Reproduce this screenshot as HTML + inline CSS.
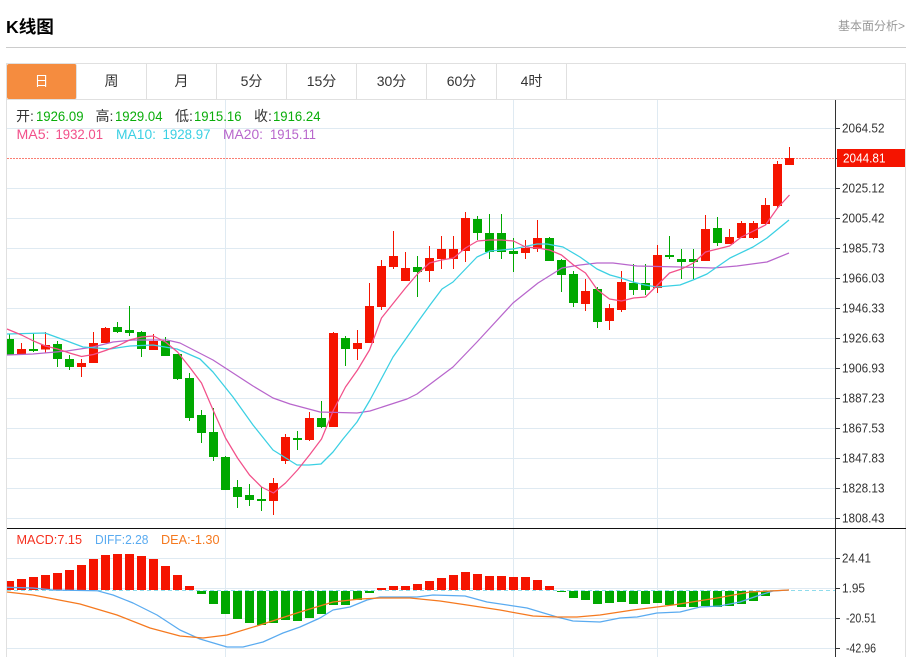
<!DOCTYPE html>
<html lang="zh">
<head>
<meta charset="utf-8">
<title>K线图</title>
<style>
html,body{margin:0;padding:0;background:#fff;}
body{width:907px;height:657px;overflow:hidden;position:relative;font-family:"Liberation Sans","Noto Sans CJK SC",sans-serif;color:#333;}
.title{position:absolute;left:6px;top:15px;font-size:17.6px;line-height:24px;font-weight:bold;color:#000;}
.more{position:absolute;left:838px;top:18px;font-size:12px;line-height:16px;color:#999;white-space:nowrap;}
.hr{position:absolute;left:6px;top:47px;width:900px;height:1px;background:#ccc;}
.tabs{position:absolute;left:6px;top:63px;width:898px;height:35px;border:1px solid #e0e0e0;box-sizing:content-box;}
.tab{position:absolute;top:0;height:35px;width:69px;border-right:1px solid #e0e0e0;text-align:center;font-size:14px;line-height:35px;color:#333;}
.tab.on{background:#f58c3f;color:#fff;border-radius:2px;border-right-color:#e0e0e0;}
svg{position:absolute;left:0;top:0;}
svg text{font-family:"Liberation Sans","Noto Sans CJK SC",sans-serif;}
</style>
</head>
<body>
<div class="title">K线图</div>
<div class="more">基本面分析&gt;</div>
<div class="hr"></div>
<div class="tabs">
<div class="tab on" style="left:0">日</div>
<div class="tab" style="left:70px">周</div>
<div class="tab" style="left:140px">月</div>
<div class="tab" style="left:210px">5分</div>
<div class="tab" style="left:280px">15分</div>
<div class="tab" style="left:350px">30分</div>
<div class="tab" style="left:420px">60分</div>
<div class="tab" style="left:490px">4时</div>
</div>
<svg width="907" height="657" viewBox="0 0 907 657" xmlns="http://www.w3.org/2000/svg">
<!-- frame -->
<path d="M6.5 100V657M905.5 100V657" stroke="#e0e0e0" fill="none"/>
<!-- grid -->
<path d="M7 128.5H835M7 188.5H835M7 218.5H835M7 248.5H835M7 278.5H835M7 308.5H835M7 338.5H835M7 368.5H835M7 398.5H835M7 428.5H835M7 458.5H835M7 488.5H835M7 518.5H835M7 558.5H835M7 588.5H835M7 618.5H835M7 648.5H835M225.5 100V657M513.5 100V657M657.5 100V657" stroke="#dfeaf2" fill="none"/>
<!-- macd bars -->
<path fill="#f51400" d="M7 581h7v9h-7zM17 579h9v11h-9zM29 577h9v13h-9zM41 575h9v15h-9zM53 573h9v17h-9zM65 570h9v20h-9zM77 565h9v25h-9zM89 559h9v31h-9zM101 555h9v35h-9zM113 554h9v36h-9zM125 554h9v36h-9zM137 556h9v34h-9zM149 559h9v31h-9zM161 566h9v24h-9zM173 575h9v15h-9zM185 586h9v4h-9zM377 588h9v2h-9zM389 586h9v4h-9zM401 586h9v4h-9zM413 584h9v6h-9zM425 581h9v9h-9zM437 578h9v12h-9zM449 575h9v15h-9zM461 572h9v18h-9zM473 574h9v16h-9zM485 576h9v14h-9zM497 576h9v14h-9zM509 577h9v13h-9zM521 577h9v13h-9zM533 580h9v10h-9zM545 586h9v4h-9z"/>
<path fill="#00a800" d="M197 591h9v3h-9zM209 591h9v13h-9zM221 591h9v23h-9zM233 591h9v28h-9zM245 591h9v32h-9zM257 591h9v34h-9zM269 591h9v32h-9zM281 591h9v29h-9zM293 591h9v30h-9zM305 591h9v27h-9zM317 591h9v23h-9zM329 591h9v14h-9zM341 591h9v14h-9zM353 591h9v9h-9zM365 591h9v2h-9zM557 591h9v1h-9zM569 591h9v7h-9zM581 591h9v9h-9zM593 591h9v13h-9zM605 591h9v12h-9zM617 591h9v11h-9zM629 591h9v13h-9zM641 591h9v13h-9zM653 591h9v12h-9zM665 591h9v14h-9zM677 591h9v16h-9zM689 591h9v16h-9zM701 591h9v15h-9zM713 591h9v16h-9zM725 591h9v15h-9zM737 591h9v13h-9zM749 591h9v10h-9zM761 591h9v5h-9z"/>
<path d="M7 590.5H835" stroke="#8fdcec" stroke-dasharray="4 3" fill="none"/>
<!-- macd lines -->
<polyline fill="none" stroke="#5aabf0" stroke-width="1.25" stroke-linejoin="round" points="7,587.3 33,588 53,590 97,590.7 113,595 133,603 157,615 180,630 200,639 227,647 243,647 263,642 283,633 300,627 320,618 333,610 350,607 367,600 380,597 417,597 433,595 465,596 487,602 527,608 557,617 573,621 600,622 620,618 637,617 657,613 680,612 700,607 720,606 740,602 760,595 773,591 789,590"/>
<polyline fill="none" stroke="#f5791f" stroke-width="1.25" stroke-linejoin="round" points="7,592 33,595 80,604 117,615 150,628 180,636 203,638 227,635 260,625 300,612 333,602 360,599 380,598 410,598 440,601 467,605 500,610 533,616 557,617 577,617 600,615 633,610 673,605 717,598 750,592 770,591 789,590"/>
<!-- candles -->
<path stroke="#f51400" fill="none" d="M21.5 343V354M45.5 332V353M81.5 359V377M93.5 332V363M105.5 327V343M153.5 334V350M273.5 478V515M285.5 434V464M309.5 412V441M333.5 332V427M357.5 330V360M369.5 283V343M381.5 260V310M393.5 231V269M405.5 252V281M429.5 246V282M441.5 236V269M453.5 236V269M465.5 212V262M525.5 240V259M537.5 220V252M585.5 279V311M609.5 304V330M621.5 271V312M657.5 245V293M705.5 215V261M729.5 229V244M741.5 221V238M753.5 221V239M765.5 198V225M777.5 161V208M789.5 147V165"/>
<path fill="#f51400" d="M17 349h9v5h-9zM41 345h9v4.500h-9zM77 363h9v4h-9zM89 343h9v20h-9zM101 328h9v15h-9zM149 341h9v9h-9zM269 483h9v18h-9zM281 437h9v24h-9zM305 418h9v22h-9zM329 333h9v94h-9zM353 343h9v6h-9zM365 306h9v37h-9zM377 266h9v41h-9zM389 256h9v11h-9zM401 268h9v13h-9zM425 258h9v13h-9zM437 249h9v10h-9zM449 249h9v10h-9zM461 218h9v33h-9zM521 248h9v5h-9zM533 238h9v11h-9zM581 291h9v13h-9zM605 308h9v13h-9zM617 282h9v28h-9zM653 255h9v33h-9zM701 229h9v32h-9zM725 237h9v7h-9zM737 223h9v15h-9zM749 223h9v15h-9zM761 205h9v19h-9zM773 164h9v42h-9zM785 158h9v7h-9z"/>
<path stroke="#00a800" fill="none" d="M9.500 334V355M33.500 333V352M57.500 341V367M69.500 355V370M117.500 322V333M129.500 306V336M141.500 331V357M165.500 337V356M177.500 354V380M189.500 373V421M201.500 410V443M213.500 408V461M225.500 456V490M237.500 480V508M249.500 484V506M261.500 487V511M297.500 431V450M321.500 401V428M345.500 336V366M417.500 256V297M477.500 216V240M489.500 214V259M501.500 214V259M513.500 238V272M549.500 237V261M561.500 259V292M573.500 271V307M597.500 287V328M633.500 264V295M645.500 264V295M669.500 236V259M681.500 249V279M693.500 249V279M717.500 217V246"/>
<path fill="#00a800" d="M7 339h7v16h-7zM29 349h9v2h-9zM53 344h9v15h-9zM65 359h9v8h-9zM113 327h9v5h-9zM125 330h9v3h-9zM137 332h9v17h-9zM161 341h9v15h-9zM173 354h9v25h-9zM185 378h9v40h-9zM197 415h9v18h-9zM209 432h9v25h-9zM221 457h9v33h-9zM233 487h9v10h-9zM245 495h9v5h-9zM257 499h9v2h-9zM293 438h9v2h-9zM317 418h9v9h-9zM341 338h9v11h-9zM413 267h9v5h-9zM473 219h9v14h-9zM485 233h9v19h-9zM497 233h9v19h-9zM509 251h9v3h-9zM545 238h9v23h-9zM557 260h9v15h-9zM569 274h9v29h-9zM593 289h9v33h-9zM629 283h9v7h-9zM641 283h9v7h-9zM665 255h9v2h-9zM677 259h9v3h-9zM689 259h9v3h-9zM713 228h9v15h-9z"/>
<!-- MA lines -->
<polyline fill="none" stroke="#b866cc" stroke-width="1.25" stroke-linejoin="round" points="7,355 33,354 67,351 93,347 113,342 133,340 167,340 180,343 213,360 233,373 253,386 273,398 290,404 320,412 357,413 370,411 407,399 417,394 433,382 453,367 477,342 513,303 538,283 562,268 580,265 597,263 613,263 637,266 680,267 713,268 737,266 767,262 789,253"/>
<polyline fill="none" stroke="#3bd0e3" stroke-width="1.25" stroke-linejoin="round" points="7,334 45,333 67,341 83,347 110,349 130,346 153,345 177,349 200,359 213,372 233,397 253,425 273,450 297,465 309,465 321,464 333,452 343,439 357,422 370,400 393,357 417,323 430,305 442,289 453,282 477,257 490,251 513,249 537,244 547,244 563,247 580,257 597,269 610,275 621,278 633,282 645,285 657,287 680,285 693,280 707,274 717,267 730,258 753,247 767,238 789,220"/>
<polyline fill="none" stroke="#f2508a" stroke-width="1.25" stroke-linejoin="round" points="7,329 21.500,335 33.500,341 45.500,346 57.500,349 69.500,353 81.500,356.500 93.500,354.500 105.500,350.500 117.500,346 129.500,340 141.500,337 153.500,336 165.500,342 177.500,352 189.500,367 201.500,383 213.500,411 225.500,438 237.500,458 249.500,475 261.500,487 273.500,493 285.500,483 297.500,470 309.500,455 321.500,439 333.500,410 345.500,387 357.500,370 369.500,350 381.500,318 393.500,303 405.500,288 417.500,274 429.500,263 441.500,260 453.500,258 465.500,248 477.500,241 489.500,240 501.500,240 513.500,241 525.500,247 537.500,248 549.500,250 561.500,255 573.500,265 585.500,273 597.500,290 609.500,299 621.500,301 633.500,298 645.500,297 657.500,285 669.500,273 681.500,269 693.500,263 705.500,252 717.500,249 729.500,246 741.500,237 753.500,231 765.500,225 777.500,208 789.500,195"/>
<!-- price line -->
<path d="M7 158.500H835" stroke="#f51400" stroke-dasharray="2 1" stroke-opacity="0.55" fill="none"/>
<!-- axes -->
<path d="M835.500 100V657" stroke="#333" fill="none"/>
<path d="M7 528.500H906" stroke="#111" fill="none"/>
<path d="M836 128.500h4M836 158.500h4M836 188.500h4M836 218.500h4M836 248.500h4M836 278.500h4M836 308.500h4M836 338.500h4M836 368.500h4M836 398.500h4M836 428.500h4M836 458.500h4M836 488.500h4M836 518.500h4M836 558.500h4M836 588.500h4M836 618.500h4M836 648.500h4" stroke="#333" fill="none"/>
<rect x="837" y="149" width="68" height="18" fill="#f51400"/>
<g font-size="12.500" fill="#333">
<text x="842" y="132.600" textLength="42.500" lengthAdjust="spacingAndGlyphs">2064.52</text>
<text x="843" y="162.600" textLength="42.500" lengthAdjust="spacingAndGlyphs" fill="#fff">2044.81</text>
<text x="842" y="192.600" textLength="42.500" lengthAdjust="spacingAndGlyphs">2025.12</text>
<text x="842" y="222.600" textLength="42.500" lengthAdjust="spacingAndGlyphs">2005.42</text>
<text x="842" y="252.600" textLength="42.500" lengthAdjust="spacingAndGlyphs">1985.73</text>
<text x="842" y="282.600" textLength="42.500" lengthAdjust="spacingAndGlyphs">1966.03</text>
<text x="842" y="312.600" textLength="42.500" lengthAdjust="spacingAndGlyphs">1946.33</text>
<text x="842" y="342.600" textLength="42.500" lengthAdjust="spacingAndGlyphs">1926.63</text>
<text x="842" y="372.600" textLength="42.500" lengthAdjust="spacingAndGlyphs">1906.93</text>
<text x="842" y="402.600" textLength="42.500" lengthAdjust="spacingAndGlyphs">1887.23</text>
<text x="842" y="432.600" textLength="42.500" lengthAdjust="spacingAndGlyphs">1867.53</text>
<text x="842" y="462.600" textLength="42.500" lengthAdjust="spacingAndGlyphs">1847.83</text>
<text x="842" y="492.600" textLength="42.500" lengthAdjust="spacingAndGlyphs">1828.13</text>
<text x="842" y="522.600" textLength="42.500" lengthAdjust="spacingAndGlyphs">1808.43</text>
<text x="842" y="562.600" textLength="29" lengthAdjust="spacingAndGlyphs">24.41</text>
<text x="842" y="592.600" textLength="23" lengthAdjust="spacingAndGlyphs">1.95</text>
<text x="846" y="622.600" textLength="30" lengthAdjust="spacingAndGlyphs">-20.51</text>
<text x="846" y="652.600" textLength="30" lengthAdjust="spacingAndGlyphs">-42.96</text>
</g>
<!-- info -->
<g font-size="14">
<text x="16" y="121" fill="#333">开:</text>
<text x="36" y="121" fill="#0aad0a" textLength="47.500" lengthAdjust="spacingAndGlyphs">1926.09</text>
<text x="95.500" y="121" fill="#333">高:</text>
<text x="115" y="121" fill="#0aad0a" textLength="47.500" lengthAdjust="spacingAndGlyphs">1929.04</text>
<text x="175" y="121" fill="#333">低:</text>
<text x="194" y="121" fill="#0aad0a" textLength="47.500" lengthAdjust="spacingAndGlyphs">1915.16</text>
<text x="254" y="121" fill="#333">收:</text>
<text x="273" y="121" fill="#0aad0a" textLength="47.500" lengthAdjust="spacingAndGlyphs">1916.24</text>
<text x="16.500" y="139" fill="#f2508a" textLength="33" lengthAdjust="spacingAndGlyphs">MA5:</text>
<text x="55.500" y="139" fill="#f2508a" textLength="47.500" lengthAdjust="spacingAndGlyphs">1932.01</text>
<text x="116" y="139" fill="#3bd0e3" textLength="40" lengthAdjust="spacingAndGlyphs">MA10:</text>
<text x="162.500" y="139" fill="#3bd0e3" textLength="48" lengthAdjust="spacingAndGlyphs">1928.97</text>
<text x="223" y="139" fill="#b866cc" textLength="40" lengthAdjust="spacingAndGlyphs">MA20:</text>
<text x="270" y="139" fill="#b866cc" textLength="46" lengthAdjust="spacingAndGlyphs">1915.11</text>
</g>
<g font-size="13">
<text x="16.500" y="544" fill="#f5301f" textLength="65.500" lengthAdjust="spacingAndGlyphs">MACD:7.15</text>
<text x="95" y="544" fill="#5aabf0" textLength="53.500" lengthAdjust="spacingAndGlyphs">DIFF:2.28</text>
<text x="161" y="544" fill="#f5791f" textLength="58.500" lengthAdjust="spacingAndGlyphs">DEA:-1.30</text>
</g>
</svg>
</body>
</html>
